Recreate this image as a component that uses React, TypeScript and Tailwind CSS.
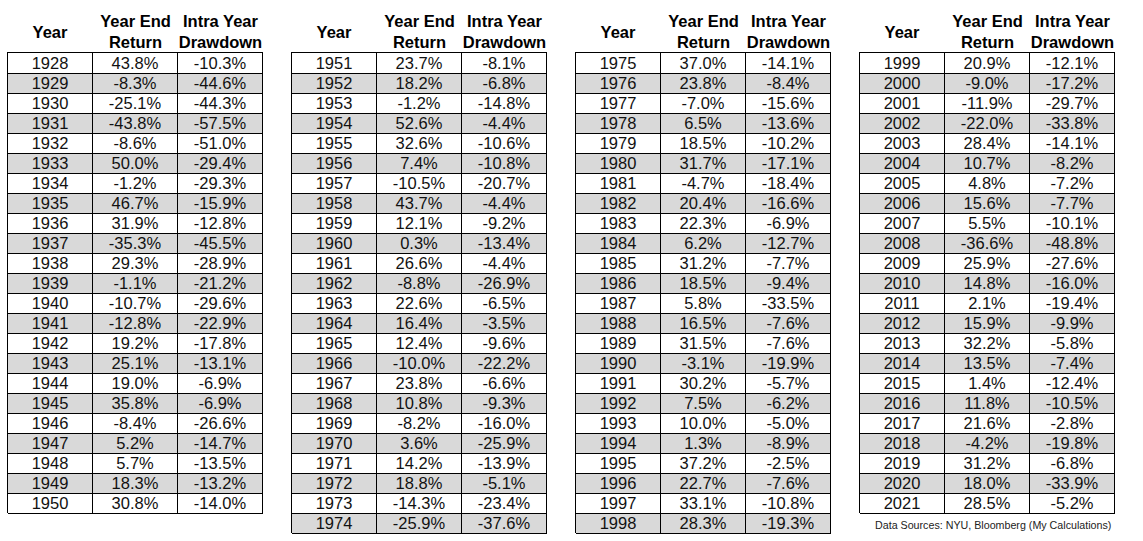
const tables: [string, string, string][][] = [
  [
    ["1928", "43.8%", "-10.3%"],
    ["1929", "-8.3%", "-44.6%"],
    ["1930", "-25.1%", "-44.3%"],
    ["1931", "-43.8%", "-57.5%"],
    ["1932", "-8.6%", "-51.0%"],
    ["1933", "50.0%", "-29.4%"],
    ["1934", "-1.2%", "-29.3%"],
    ["1935", "46.7%", "-15.9%"],
    ["1936", "31.9%", "-12.8%"],
    ["1937", "-35.3%", "-45.5%"],
    ["1938", "29.3%", "-28.9%"],
    ["1939", "-1.1%", "-21.2%"],
    ["1940", "-10.7%", "-29.6%"],
    ["1941", "-12.8%", "-22.9%"],
    ["1942", "19.2%", "-17.8%"],
    ["1943", "25.1%", "-13.1%"],
    ["1944", "19.0%", "-6.9%"],
    ["1945", "35.8%", "-6.9%"],
    ["1946", "-8.4%", "-26.6%"],
    ["1947", "5.2%", "-14.7%"],
    ["1948", "5.7%", "-13.5%"],
    ["1949", "18.3%", "-13.2%"],
    ["1950", "30.8%", "-14.0%"],
  ],
  [
    ["1951", "23.7%", "-8.1%"],
    ["1952", "18.2%", "-6.8%"],
    ["1953", "-1.2%", "-14.8%"],
    ["1954", "52.6%", "-4.4%"],
    ["1955", "32.6%", "-10.6%"],
    ["1956", "7.4%", "-10.8%"],
    ["1957", "-10.5%", "-20.7%"],
    ["1958", "43.7%", "-4.4%"],
    ["1959", "12.1%", "-9.2%"],
    ["1960", "0.3%", "-13.4%"],
    ["1961", "26.6%", "-4.4%"],
    ["1962", "-8.8%", "-26.9%"],
    ["1963", "22.6%", "-6.5%"],
    ["1964", "16.4%", "-3.5%"],
    ["1965", "12.4%", "-9.6%"],
    ["1966", "-10.0%", "-22.2%"],
    ["1967", "23.8%", "-6.6%"],
    ["1968", "10.8%", "-9.3%"],
    ["1969", "-8.2%", "-16.0%"],
    ["1970", "3.6%", "-25.9%"],
    ["1971", "14.2%", "-13.9%"],
    ["1972", "18.8%", "-5.1%"],
    ["1973", "-14.3%", "-23.4%"],
    ["1974", "-25.9%", "-37.6%"],
  ],
  [
    ["1975", "37.0%", "-14.1%"],
    ["1976", "23.8%", "-8.4%"],
    ["1977", "-7.0%", "-15.6%"],
    ["1978", "6.5%", "-13.6%"],
    ["1979", "18.5%", "-10.2%"],
    ["1980", "31.7%", "-17.1%"],
    ["1981", "-4.7%", "-18.4%"],
    ["1982", "20.4%", "-16.6%"],
    ["1983", "22.3%", "-6.9%"],
    ["1984", "6.2%", "-12.7%"],
    ["1985", "31.2%", "-7.7%"],
    ["1986", "18.5%", "-9.4%"],
    ["1987", "5.8%", "-33.5%"],
    ["1988", "16.5%", "-7.6%"],
    ["1989", "31.5%", "-7.6%"],
    ["1990", "-3.1%", "-19.9%"],
    ["1991", "30.2%", "-5.7%"],
    ["1992", "7.5%", "-6.2%"],
    ["1993", "10.0%", "-5.0%"],
    ["1994", "1.3%", "-8.9%"],
    ["1995", "37.2%", "-2.5%"],
    ["1996", "22.7%", "-7.6%"],
    ["1997", "33.1%", "-10.8%"],
    ["1998", "28.3%", "-19.3%"],
  ],
  [
    ["1999", "20.9%", "-12.1%"],
    ["2000", "-9.0%", "-17.2%"],
    ["2001", "-11.9%", "-29.7%"],
    ["2002", "-22.0%", "-33.8%"],
    ["2003", "28.4%", "-14.1%"],
    ["2004", "10.7%", "-8.2%"],
    ["2005", "4.8%", "-7.2%"],
    ["2006", "15.6%", "-7.7%"],
    ["2007", "5.5%", "-10.1%"],
    ["2008", "-36.6%", "-48.8%"],
    ["2009", "25.9%", "-27.6%"],
    ["2010", "14.8%", "-16.0%"],
    ["2011", "2.1%", "-19.4%"],
    ["2012", "15.9%", "-9.9%"],
    ["2013", "32.2%", "-5.8%"],
    ["2014", "13.5%", "-7.4%"],
    ["2015", "1.4%", "-12.4%"],
    ["2016", "11.8%", "-10.5%"],
    ["2017", "21.6%", "-2.8%"],
    ["2018", "-4.2%", "-19.8%"],
    ["2019", "31.2%", "-6.8%"],
    ["2020", "18.0%", "-33.9%"],
    ["2021", "28.5%", "-5.2%"],
  ],
]

function ReturnTable({ rows, footer }: { rows: [string, string, string][]; footer?: boolean }) {
  return (
    <div className="w-[256px]">
      <div className="grid h-[41px] grid-cols-[86px_85px_85px] text-center text-[16.5px] font-bold leading-[21px] text-black">
        <div className="flex items-center justify-center">Year</div>
        <div>
          Year End
          <br />
          Return
        </div>
        <div>
          Intra Year
          <br />
          Drawdown
        </div>
      </div>
      <div className="border-l border-t border-black">
        {rows.map((r, i) => (
          <div
            key={r[0]}
            className={`grid h-5 grid-cols-[85px_85px_85px] text-center text-[16.5px] leading-[20px] text-[#111] ${
              i % 2 === 1 ? "bg-[#d9d9d9]" : "bg-white"
            }`}
          >
            <div className="border-b border-r border-black">{r[0]}</div>
            <div className="border-b border-r border-black">{r[1]}</div>
            <div className="border-b border-r border-black">{r[2]}</div>
          </div>
        ))}
      </div>
      {footer && (
        <div className="mt-[5px] pl-[16px] text-[10.7px] leading-[14px] text-[#222]">
          Data Sources: NYU, Bloomberg (My Calculations)
        </div>
      )}
    </div>
  )
}

export default function App() {
  return (
    <div className="flex min-h-[541px] w-[1143px] items-start gap-[28px] bg-white pl-[7px] pt-[11px] font-['Liberation_Sans',Arial,sans-serif]">
      {tables.map((rows, i) => (
        <ReturnTable key={i} rows={rows} footer={i === 3} />
      ))}
    </div>
  )
}
